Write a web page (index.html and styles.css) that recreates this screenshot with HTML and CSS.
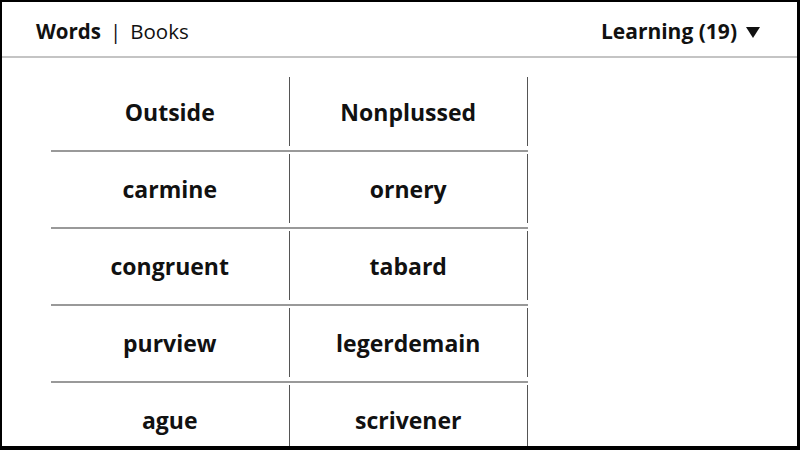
FILE: index.html
```html
<!DOCTYPE html>
<html lang="en">
<head>
  <meta charset="UTF-8" />
  <title>Vocabulary Builder</title>
  <link rel="stylesheet" href="styles.css">
</head>
<body>
  <div class="frame">
    <header class="topbar">
      <nav class="tabs">
        <span class="tab active">Words</span>
        <span class="sep">|</span>
        <span class="tab">Books</span>
      </nav>
      <div class="filter">
        <span>Learning (19)</span>
        <svg class="caret" width="14" height="11" viewBox="0 0 14 11"><polygon points="0,0 14,0 7,11" fill="#111"/></svg>
      </div>
    </header>

    <div class="words">
      <div class="row">
        <div class="cell"><div class="word">Outside</div></div>
        <div class="cell"><div class="word">Nonplussed</div></div>
      </div>
      <div class="row">
        <div class="cell"><div class="word">carmine</div></div>
        <div class="cell"><div class="word">ornery</div></div>
      </div>
      <div class="row">
        <div class="cell"><div class="word">congruent</div></div>
        <div class="cell"><div class="word">tabard</div></div>
      </div>
      <div class="row">
        <div class="cell"><div class="word">purview</div></div>
        <div class="cell"><div class="word">legerdemain</div></div>
      </div>
      <div class="row">
        <div class="cell"><div class="word">ague</div></div>
        <div class="cell"><div class="word">scrivener</div></div>
      </div>
    </div>
  </div>
</body>
</html>
```

FILE: styles.css
```css
* {
  box-sizing: border-box;
}

body {
  margin: 0;
  font-family: 'Open Sans', 'Noto Sans', sans-serif;
  color: #111;
  background: #000;
}

.frame {
  width: 800px;
  height: 450px;
  background: white;
  border-style: solid;
  border-color: #000;
  border-width: 2px 3px 4px 2px;
  overflow: hidden;
}

/* top bar */
.topbar {
  height: 56px;
  border-bottom: 2px solid #c4c4c4;
  display: flex;
  align-items: center;
  justify-content: space-between;
  padding: 4px 37px 0 34px;
  font-size: 20.5px;
}

.tabs {
  display: flex;
  align-items: center;
  gap: 9px;
}

.tab.active {
  font-weight: 700;
}

.sep {
  font-weight: 400;
}

.filter {
  display: flex;
  align-items: center;
  gap: 9px;
  font-size: 21px;
  font-weight: 700;
}

.caret {
  display: block;
  margin-top: 2px;
}

/* word grid */
.words {
  margin: 17px 0 0 49px;
  width: 477px;
}

.row {
  display: flex;
  height: 77px;
  border-bottom: 2px solid #999;
}

.cell {
  flex: 1;
  display: flex;
  padding: 2px 0 4px;
}

.word {
  flex: 1;
  display: flex;
  align-items: center;
  justify-content: center;
  border-right: 1px solid #555;
  font-size: 23px;
  font-weight: 700;
}
```
